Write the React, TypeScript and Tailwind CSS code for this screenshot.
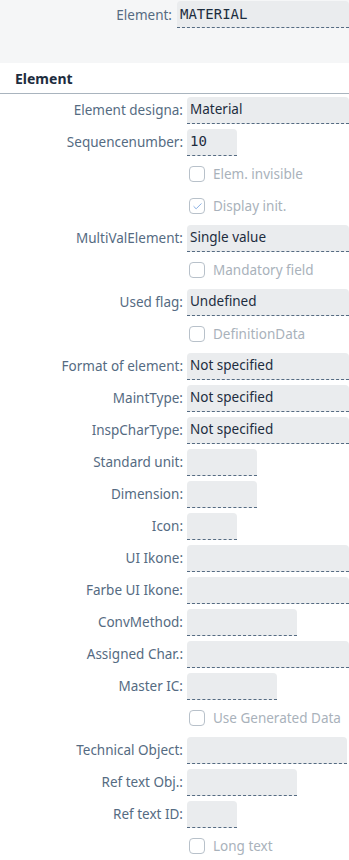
import { Check } from "lucide-react";

type Row =
  | { kind: "field"; label: string; value?: string; width: string; mono?: boolean }
  | { kind: "check"; label: string; checked?: boolean };

const rows: Row[] = [
  { kind: "field", label: "Element designa:", value: "Material", width: "w-[162px]" },
  { kind: "field", label: "Sequencenumber:", value: "10", width: "w-[50px]", mono: true },
  { kind: "check", label: "Elem. invisible" },
  { kind: "check", label: "Display init.", checked: true },
  { kind: "field", label: "MultiValElement:", value: "Single value", width: "w-[162px]" },
  { kind: "check", label: "Mandatory field" },
  { kind: "field", label: "Used flag:", value: "Undefined", width: "w-[162px]" },
  { kind: "check", label: "DefinitionData" },
  { kind: "field", label: "Format of element:", value: "Not specified", width: "w-[162px]" },
  { kind: "field", label: "MaintType:", value: "Not specified", width: "w-[162px]" },
  { kind: "field", label: "InspCharType:", value: "Not specified", width: "w-[162px]" },
  { kind: "field", label: "Standard unit:", width: "w-[70px]" },
  { kind: "field", label: "Dimension:", width: "w-[70px]" },
  { kind: "field", label: "Icon:", width: "w-[50px]" },
  { kind: "field", label: "UI Ikone:", width: "w-[162px]" },
  { kind: "field", label: "Farbe UI Ikone:", width: "w-[162px]" },
  { kind: "field", label: "ConvMethod:", width: "w-[110px]" },
  { kind: "field", label: "Assigned Char.:", width: "w-[162px]" },
  { kind: "field", label: "Master IC:", width: "w-[90px]" },
  { kind: "check", label: "Use Generated Data" },
  { kind: "field", label: "Technical Object:", width: "w-[160px]" },
  { kind: "field", label: "Ref text Obj.:", width: "w-[110px]" },
  { kind: "field", label: "Ref text ID:", width: "w-[50px]" },
  { kind: "check", label: "Long text" },
];

const Field = ({ value, width, mono }: { value?: string; width: string; mono?: boolean }) => (
  <div
    className={`${width} h-[27px] shrink-0 bg-[#eaecee] rounded-t-[4px] border-b border-dashed border-[#556b82] px-[3px] flex items-center text-[#1d2d3e] ${
      mono ? "font-['DejaVu_Sans_Mono',monospace] text-[14px]" : "text-[13.5px]"
    }`}
  >
    {value}
  </div>
);

export default function App() {
  return (
    <div className="w-[349px] overflow-hidden bg-white font-['Noto_Sans',sans-serif]">
      <div className="h-[63px] bg-[#f5f6f7]">
        <div className="flex items-start pt-[1px]">
          <div className="w-[177px] shrink-0 text-right pr-[5px] pt-[4px] text-[13.5px] text-[#556b82]">
            Element:
          </div>
          <div className="flex-1 h-[27px] bg-[#eaecee] rounded-t-[4px] border-b border-dashed border-[#556b82] px-[3px] flex items-center font-['DejaVu_Sans_Mono',monospace] text-[14px] text-[#1d2d3e]">
            MATERIAL
          </div>
        </div>
      </div>
      <div className="h-[31px] border-b border-[#a9b4be] px-[15px] flex items-center text-[14px] font-bold text-[#1d2d3e]">
        Element
      </div>
      <div className="flex flex-col">
        {rows.map((r, i) =>
          r.kind === "field" ? (
            <div key={i} className="h-[32px] flex items-center">
              <div className="w-[187px] shrink-0 text-right pr-[4px] text-[13.5px] text-[#556b82] whitespace-nowrap">
                {r.label}
              </div>
              <Field value={r.value} width={r.width} mono={r.mono} />
            </div>
          ) : (
            <div key={i} className="h-[32px] flex items-center pl-[189px] gap-[8px]">
              <div className="w-[16px] h-[16px] rounded-[4px] border border-[#b8c1ca] bg-white flex items-center justify-center">
                {r.checked && <Check className="w-[11px] h-[11px] text-[#7fa9e0]" strokeWidth={2} />}
              </div>
              <span className="text-[13.5px] text-[#a9b2bb]">{r.label}</span>
            </div>
          )
        )}
      </div>
    </div>
  );
}
